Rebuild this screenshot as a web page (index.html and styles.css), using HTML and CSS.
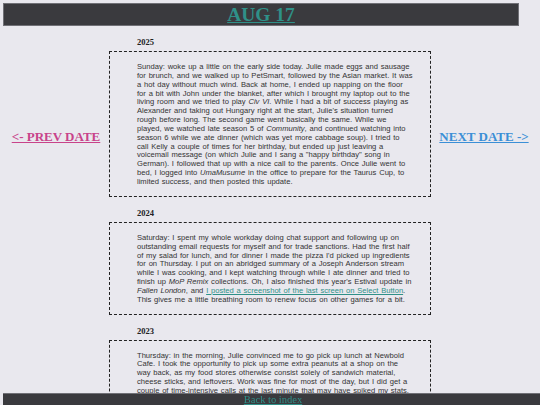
FILE: index.html
```html
<!DOCTYPE html>
<html lang="en">
<head>
  <meta charset="UTF-8">
  <title>Aug 17</title>
  <link rel="stylesheet" href="styles.css">
</head>
<body>

  <header class="top-bar">
    <h1><a href="#">AUG 17</a></h1>
  </header>

  <div class="layout">
    <div class="side">
      <a href="#" class="prev">&lt;- PREV DATE</a>
    </div>

    <main class="entries">
      <section class="year">
        <h2>2025</h2>
        <div class="entry">
          <p>Sunday: woke up a little on the early side today. Julie made eggs and sausage for brunch, and we walked up to PetSmart, followed by the Asian market. It was a hot day without much wind. Back at home, I ended up napping on the floor for a bit with John under the blanket, after which I brought my laptop out to the living room and we tried to play <i>Civ VI</i>. While I had a bit of success playing as Alexander and taking out Hungary right at the start, Julie's situation turned rough before long. The second game went basically the same. While we played, we watched late season 5 of <i>Community</i>, and continued watching into season 6 while we ate dinner (which was yet more cabbage soup). I tried to call Kelly a couple of times for her birthday, but ended up just leaving a voicemail message (on which Julie and I sang a "happy birthday" song in German). I followed that up with a nice call to the parents. Once Julie went to bed, I logged into <i>UmaMusume</i> in the office to prepare for the Taurus Cup, to limited success, and then posted this update.</p>
        </div>
      </section>

      <section class="year">
        <h2>2024</h2>
        <div class="entry">
          <p>Saturday: I spent my whole workday doing chat support and following up on outstanding email requests for myself and for trade sanctions. Had the first half of my salad for lunch, and for dinner I made the pizza I'd picked up ingredients for on Thursday. I put on an abridged summary of a Joseph Anderson stream while I was cooking, and I kept watching through while I ate dinner and tried to finish up <i>MoP Remix</i> collections. Oh, I also finished this year's Estival update in <i>Fallen London</i>, and <a href="#">I posted a screenshot of the last screen on Select Button</a>. This gives me a little breathing room to renew focus on other games for a bit.</p>
        </div>
      </section>

      <section class="year">
        <h2>2023</h2>
        <div class="entry">
          <p>Thursday: in the morning, Julie convinced me to go pick up lunch at Newbold Cafe. I took the opportunity to pick up some extra peanuts at a shop on the way back, as my food stores otherwise consist solely of sandwich material, cheese sticks, and leftovers. Work was fine for most of the day, but I did get a couple of time-intensive calls at the last minute that may have spiked my stats.</p>
        </div>
      </section>
    </main>

    <div class="side">
      <a href="#" class="next">NEXT DATE -&gt;</a>
    </div>
  </div>

  <footer class="bottom-bar">
    <a href="#">Back to index</a>
  </footer>

</body>
</html>
```

FILE: styles.css
```css
:root {
  --bg-color: #e9e8ee;
  --bar-bg: #3a3a3e;
  --bar-border: #707076;
  --teal: #2f9088;
  --prev: #c8438a;
  --next: #3b8fd6;
  --text-color: #333;
}

* {
  box-sizing: border-box;
}

body {
  margin: 3px;
  background-color: var(--bg-color);
  font-family: 'Liberation Serif', 'Times New Roman', serif;
  color: var(--text-color);
}

.top-bar {
  width: 516px;
  height: 23px;
  background: var(--bar-bg);
  border: 1px solid var(--bar-border);
  text-align: center;
}

.top-bar h1 {
  margin: 0;
  font-size: 19.5px;
  line-height: 21px;
}

.top-bar a,
.bottom-bar a {
  color: var(--teal);
}

.layout {
  display: grid;
  grid-template-columns: 106px 322px 1fr;
}

.side {
  text-align: center;
  padding-top: 101px;
}

.side a {
  font-weight: bold;
  font-size: 13px;
}

.prev {
  color: var(--prev);
}

.next {
  color: var(--next);
}

.year h2 {
  margin: 11px 0 4px 28px;
  font-size: 8.5px;
  line-height: 10px;
  color: #222;
}

.entry {
  border: 1px dashed #222;
  padding: 11px 16.86px 9px 27px;
}

.entry p {
  margin: 0;
  font-family: 'Liberation Sans', Arial, sans-serif;
  font-size: 7.6px;
  line-height: 8.85px;
  word-spacing: 0.66px;
}

.entry a {
  color: var(--teal);
}

.bottom-bar {
  position: fixed;
  left: 3px;
  bottom: 0;
  width: 100%;
  height: 12px;
  background: var(--bar-bg);
  border-top: 1px solid var(--bar-border);
  text-align: center;
  font-size: 10.5px;
  line-height: 11px;
}
```
